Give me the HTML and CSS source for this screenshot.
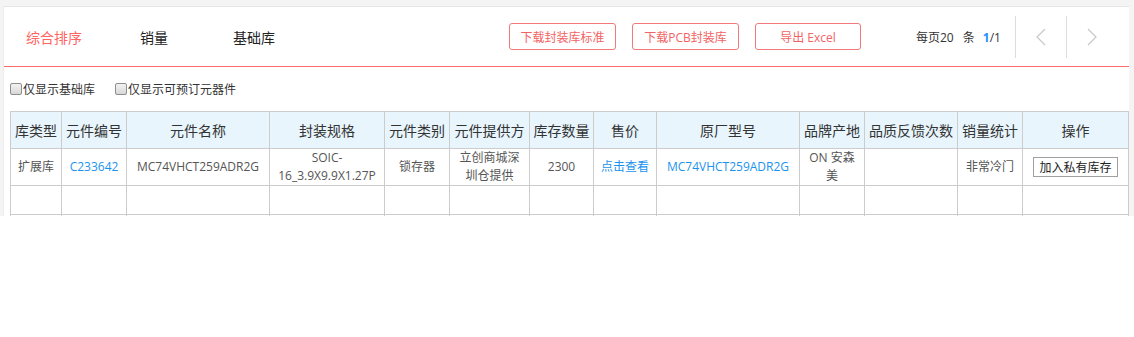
FILE: index.html
```html
<!DOCTYPE html>
<html lang="zh-CN">
<head>
<meta charset="utf-8">
<title>元件列表</title>
<link rel="stylesheet" href="styles.css">
</head>
<body>
<div class="wrap">
  <div class="panel">
    <div class="toolbar">
      <div class="tabs">
        <a class="tab active">综合排序</a>
        <a class="tab">销量</a>
        <a class="tab">基础库</a>
      </div>
      <div class="actions">
        <button class="btn-red">下载封装库标准</button>
        <button class="btn-red">下载PCB封装库</button>
        <button class="btn-red btn-excel">导出 Excel</button>
      </div>
      <div class="pager-info">每页20<span class="sp1"></span>条<span class="sp2"></span><b class="cur">1</b>/1</div>
      <div class="pager-btns">
        <span class="pbtn"><svg width="10" height="18" viewBox="0 0 10 18"><path d="M9 1 L1 9 L9 17" fill="none" stroke="#c8c8c8" stroke-width="1.2"/></svg></span>
        <span class="pbtn"><svg width="10" height="18" viewBox="0 0 10 18"><path d="M1 1 L9 9 L1 17" fill="none" stroke="#c8c8c8" stroke-width="1.2"/></svg></span>
      </div>
    </div>
    <div class="redline"></div>
    <div class="filters">
      <label class="chk"><input type="checkbox" class="cb">仅显示基础库</label>
      <label class="chk"><input type="checkbox" class="cb">仅显示可预订元器件</label>
    </div>
    <table class="grid">
      <colgroup>
        <col style="width:51px"><col style="width:65px"><col style="width:143px"><col style="width:115px"><col style="width:65px"><col style="width:80px"><col style="width:64px"><col style="width:63px"><col style="width:143px"><col style="width:65px"><col style="width:93px"><col style="width:65px"><col style="width:106px">
      </colgroup>
      <thead>
        <tr>
          <th>库类型</th><th>元件编号</th><th>元件名称</th><th>封装规格</th><th>元件类别</th><th>元件提供方</th><th>库存数量</th><th>售价</th><th>原厂型号</th><th>品牌产地</th><th>品质反馈次数</th><th>销量统计</th><th>操作</th>
        </tr>
      </thead>
      <tbody>
        <tr class="data">
          <td>扩展库</td>
          <td><a class="link">C233642</a></td>
          <td>MC74VHCT259ADR2G</td>
          <td>SOIC-<br>16_3.9X9.9X1.27P</td>
          <td>锁存器</td>
          <td>立创商城深<br>圳仓提供</td>
          <td>2300</td>
          <td><a class="link">点击查看</a></td>
          <td><a class="link">MC74VHCT259ADR2G</a></td>
          <td>ON 安森<br>美</td>
          <td></td>
          <td>非常冷门</td>
          <td><button class="btn-add">加入私有库存</button></td>
        </tr>
        <tr class="empty"><td></td><td></td><td></td><td></td><td></td><td></td><td></td><td></td><td></td><td></td><td></td><td></td><td></td></tr>
        <tr class="empty"><td></td><td></td><td></td><td></td><td></td><td></td><td></td><td></td><td></td><td></td><td></td><td></td><td></td></tr>
      </tbody>
    </table>
  </div>
</div>
</body>
</html>
```

FILE: styles.css
```css
* { box-sizing: border-box; }
html, body { margin: 0; padding: 0; background: #fff; }
body {
  font-family: "Open Sans", "Noto Sans CJK SC", sans-serif;
  font-size: 12px;
  color: #333;
}
.wrap {
  height: 216px;
  overflow: hidden;
  background: #f4f4f4;
  padding: 6px 5px 0 3px;
}
.panel {
  background: #fff;
  border-top: 1px solid #e6e6e6;
  border-left: 1px solid #ececec;
  height: 300px;
}
.toolbar {
  display: flex;
  align-items: center;
  height: 59px;
}
.redline {
  height: 1px;
  background: #ff6a6a;
}
.tabs { display: flex; }
.tab {
  width: 100px;
  text-align: center;
  font-size: 14px;
  color: #222;
  cursor: pointer;
}
.tab.active { color: #ff6464; }
.actions {
  margin-left: auto;
  display: flex;
  gap: 16px;
}
.btn-red {
  width: 107px;
  height: 27px;
  padding: 0;
  background: #fff;
  border: 1px solid #f07a7a;
  border-radius: 3px;
  color: #f26464;
  font-family: inherit;
  font-size: 12px;
  cursor: pointer;
}
.btn-excel { width: 106px; }
.pager-info {
  width: 86px;
  margin-left: 55px;
  font-size: 12px;
  color: #333;
  white-space: nowrap;
}
.sp1 { display: inline-block; width: 9px; }
.sp2 { display: inline-block; width: 8px; }
.cur { color: #1e90ff; font-weight: bold; }
.pager-btns {
  display: flex;
  margin-left: 13px;
  margin-right: 12px;
}
.pbtn {
  width: 51px;
  height: 42px;
  border-left: 1px solid #dddddd;
  display: flex;
  align-items: center;
  justify-content: center;
}
.filters {
  display: flex;
  align-items: center;
  gap: 20px;
  height: 44px;
  padding-left: 6px;
}
.chk {
  display: flex;
  align-items: center;
  color: #333;
  font-size: 12px;
}
.cb {
  appearance: none;
  -webkit-appearance: none;
  width: 12px;
  height: 12px;
  margin: 0 1px 0 0;
  border: 1px solid #8e8e8e;
  border-radius: 2px;
  background: linear-gradient(#f2f2f2, #d8d8d8);
}
.grid {
  margin-left: 6px;
  border-collapse: collapse;
  table-layout: fixed;
  width: 1119px;
}
.grid th, .grid td {
  border: 1px solid #cccccc;
  text-align: center;
  vertical-align: middle;
  padding: 0 2px;
}
.grid th {
  height: 37px;
  background: #e8f5fd;
  font-weight: normal;
  font-size: 14px;
  color: #333;
  white-space: nowrap;
}
.grid td {
  font-size: 12px;
  color: #555;
  line-height: 18px;
}
.grid tr.data td { height: 37px; }
.grid tr.empty td { height: 29px; }
.link { color: #1b93ee; cursor: pointer; }
.btn-add {
  width: 85px;
  height: 20px;
  padding: 0;
  background: #fff;
  border: 1px solid #a0a0a0;
  font-family: inherit;
  font-size: 12px;
  color: #222;
  cursor: pointer;
}
```
